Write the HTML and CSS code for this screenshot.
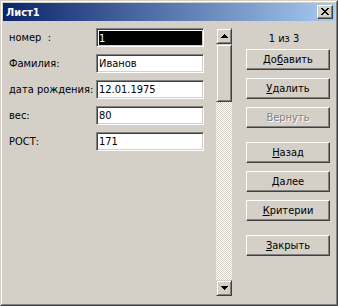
FILE: index.html
```html
<!DOCTYPE html>
<html>
<head>
<meta charset="utf-8">
<link rel="stylesheet" href="styles.css">
</head>
<body>
<div class="window">
  <div class="frame">
    <div class="titlebar">
      <span class="title">Лист1</span>
      <span class="close">
        <svg width="8" height="7" viewBox="0 0 8 7"><path d="M0 0h2v1h1v1h2V1h1V0h2v1H7v1H6v1H5v1h1v1h1v1h1v1H6V6H5V5H3v1H2v1H0V6h1V5h1V4h1V3H2V2H1V1H0z" fill="#000"/></svg>
      </span>
    </div>
    <div class="client">
      <div class="form">
        <label class="lbl">номер &nbsp;:</label><div class="field selected"><span class="sel">1</span></div>
        <label class="lbl">Фамилия:</label><div class="field">Иванов</div>
        <label class="lbl">дата рождения:</label><div class="field">12.01.1975</div>
        <label class="lbl">вес:</label><div class="field">80</div>
        <label class="lbl">РОСТ:</label><div class="field">171</div>
      </div>
      <div class="scrollbar">
        <div class="sbtn"><svg width="7" height="4" viewBox="0 0 7 4"><path d="M3 0h1v1h1v1h1v1h1v1H0V3h1V2h1V1h1z" fill="#000"/></svg></div>
        <div class="thumb"></div>
        <div class="track"></div>
        <div class="sbtn"><svg width="7" height="4" viewBox="0 0 7 4"><path d="M0 0h7v1H6v1H5v1H4v1H3V3H2V2H1V1H0z" fill="#000"/></svg></div>
      </div>
      <div class="side">
        <div class="counter">1 из 3</div>
        <div class="btn">До<u>б</u>авить</div>
        <div class="btn"><u>У</u>далить</div>
        <div class="btn disabled">Вернуть</div>
        <div class="btn group"><u>Н</u>азад</div>
        <div class="btn"><u>Д</u>алее</div>
        <div class="btn"><u>К</u>ритерии</div>
        <div class="btn group"><u>З</u>акрыть</div>
      </div>
    </div>
  </div>
</div>
</body>
</html>
```
FILE: styles.css
```css
html, body {
  margin: 0;
  padding: 0;
  background: #d4d0c8;
}
body {
  font-family: "DejaVu Sans Condensed", "DejaVu Sans", sans-serif;
  font-stretch: condensed;
  font-size: 11px;
  color: #000;
}
.window {
  width: 338px;
  height: 306px;
  box-sizing: border-box;
  border: 1px solid;
  border-color: #d4d0c8 #404040 #404040 #d4d0c8;
  background: #d4d0c8;
}
.frame {
  height: 100%;
  box-sizing: border-box;
  border: 1px solid;
  border-color: #fff #808080 #808080 #fff;
  padding: 1px;
  display: flex;
  flex-direction: column;
}
.titlebar {
  height: 18px;
  flex: none;
  background: linear-gradient(to right, #0a246a, #a6caf0);
  display: flex;
  align-items: center;
  justify-content: space-between;
  padding: 0 2px 0 3px;
}
.title {
  color: #fff;
  font-weight: bold;
  font-size: 11px;
}
.close {
  width: 16px;
  height: 14px;
  box-sizing: border-box;
  background: #d4d0c8;
  border: 1px solid;
  border-color: #fff #404040 #404040 #fff;
  box-shadow: inset -1px -1px #808080;
  display: flex;
  align-items: center;
  justify-content: center;
  padding: 0 1px 1px 0;
}
.client {
  flex: 1;
  display: flex;
  align-items: flex-start;
  padding-top: 7px;
}
.form {
  margin-left: 6px;
  display: grid;
  grid-template-columns: 87px 108px;
  grid-auto-rows: 19px;
  row-gap: 7px;
}
.lbl {
  display: flex;
  align-items: center;
  white-space: pre;
}
.field {
  box-sizing: border-box;
  border: 1px solid;
  border-color: #808080 #fff #fff #808080;
  box-shadow: inset 1px 1px #404040, inset -1px -1px #d4d0c8;
  background: #fff;
  padding-left: 2px;
  display: flex;
  align-items: center;
}
.field.selected {
  background: #fff;
  padding: 2px 1px 1px 2px;
  align-items: stretch;
}
.sel {
  flex: 1;
  background: #000;
  color: #fff;
  display: flex;
  align-items: center;
}
.scrollbar {
  margin-left: 12px;
  width: 16px;
  height: 268px;
  display: flex;
  flex-direction: column;
}
.sbtn, .thumb {
  box-sizing: border-box;
  border: 1px solid;
  border-color: #d4d0c8 #404040 #404040 #d4d0c8;
  box-shadow: inset 1px 1px #fff, inset -1px -1px #808080;
  background: #d4d0c8;
}
.sbtn {
  height: 16px;
  flex: none;
  display: flex;
  align-items: center;
  justify-content: center;
}
.thumb {
  height: 58px;
  flex: none;
}
.track {
  flex: 1;
  background-image: conic-gradient(#fff 25%, #d4d0c8 0 50%, #fff 0 75%, #d4d0c8 0);
  background-size: 2px 2px;
}
.side {
  margin-left: 14px;
  width: 84px;
  display: flex;
  flex-direction: column;
}
.counter {
  height: 21px;
  display: flex;
  align-items: center;
  justify-content: center;
  padding-right: 8px;
}
.btn {
  height: 21px;
  box-sizing: border-box;
  border: 1px solid;
  border-color: #fff #404040 #404040 #fff;
  box-shadow: inset -1px -1px #808080;
  display: flex;
  align-items: center;
  justify-content: center;
  margin-bottom: 8px;
}
.btn.group {
  margin-top: 6px;
}
.btn u {
  text-decoration-thickness: 1px;
  text-underline-offset: 1px;
}
.btn.disabled {
  color: #808080;
  text-shadow: 1px 1px #fff;
}
```
